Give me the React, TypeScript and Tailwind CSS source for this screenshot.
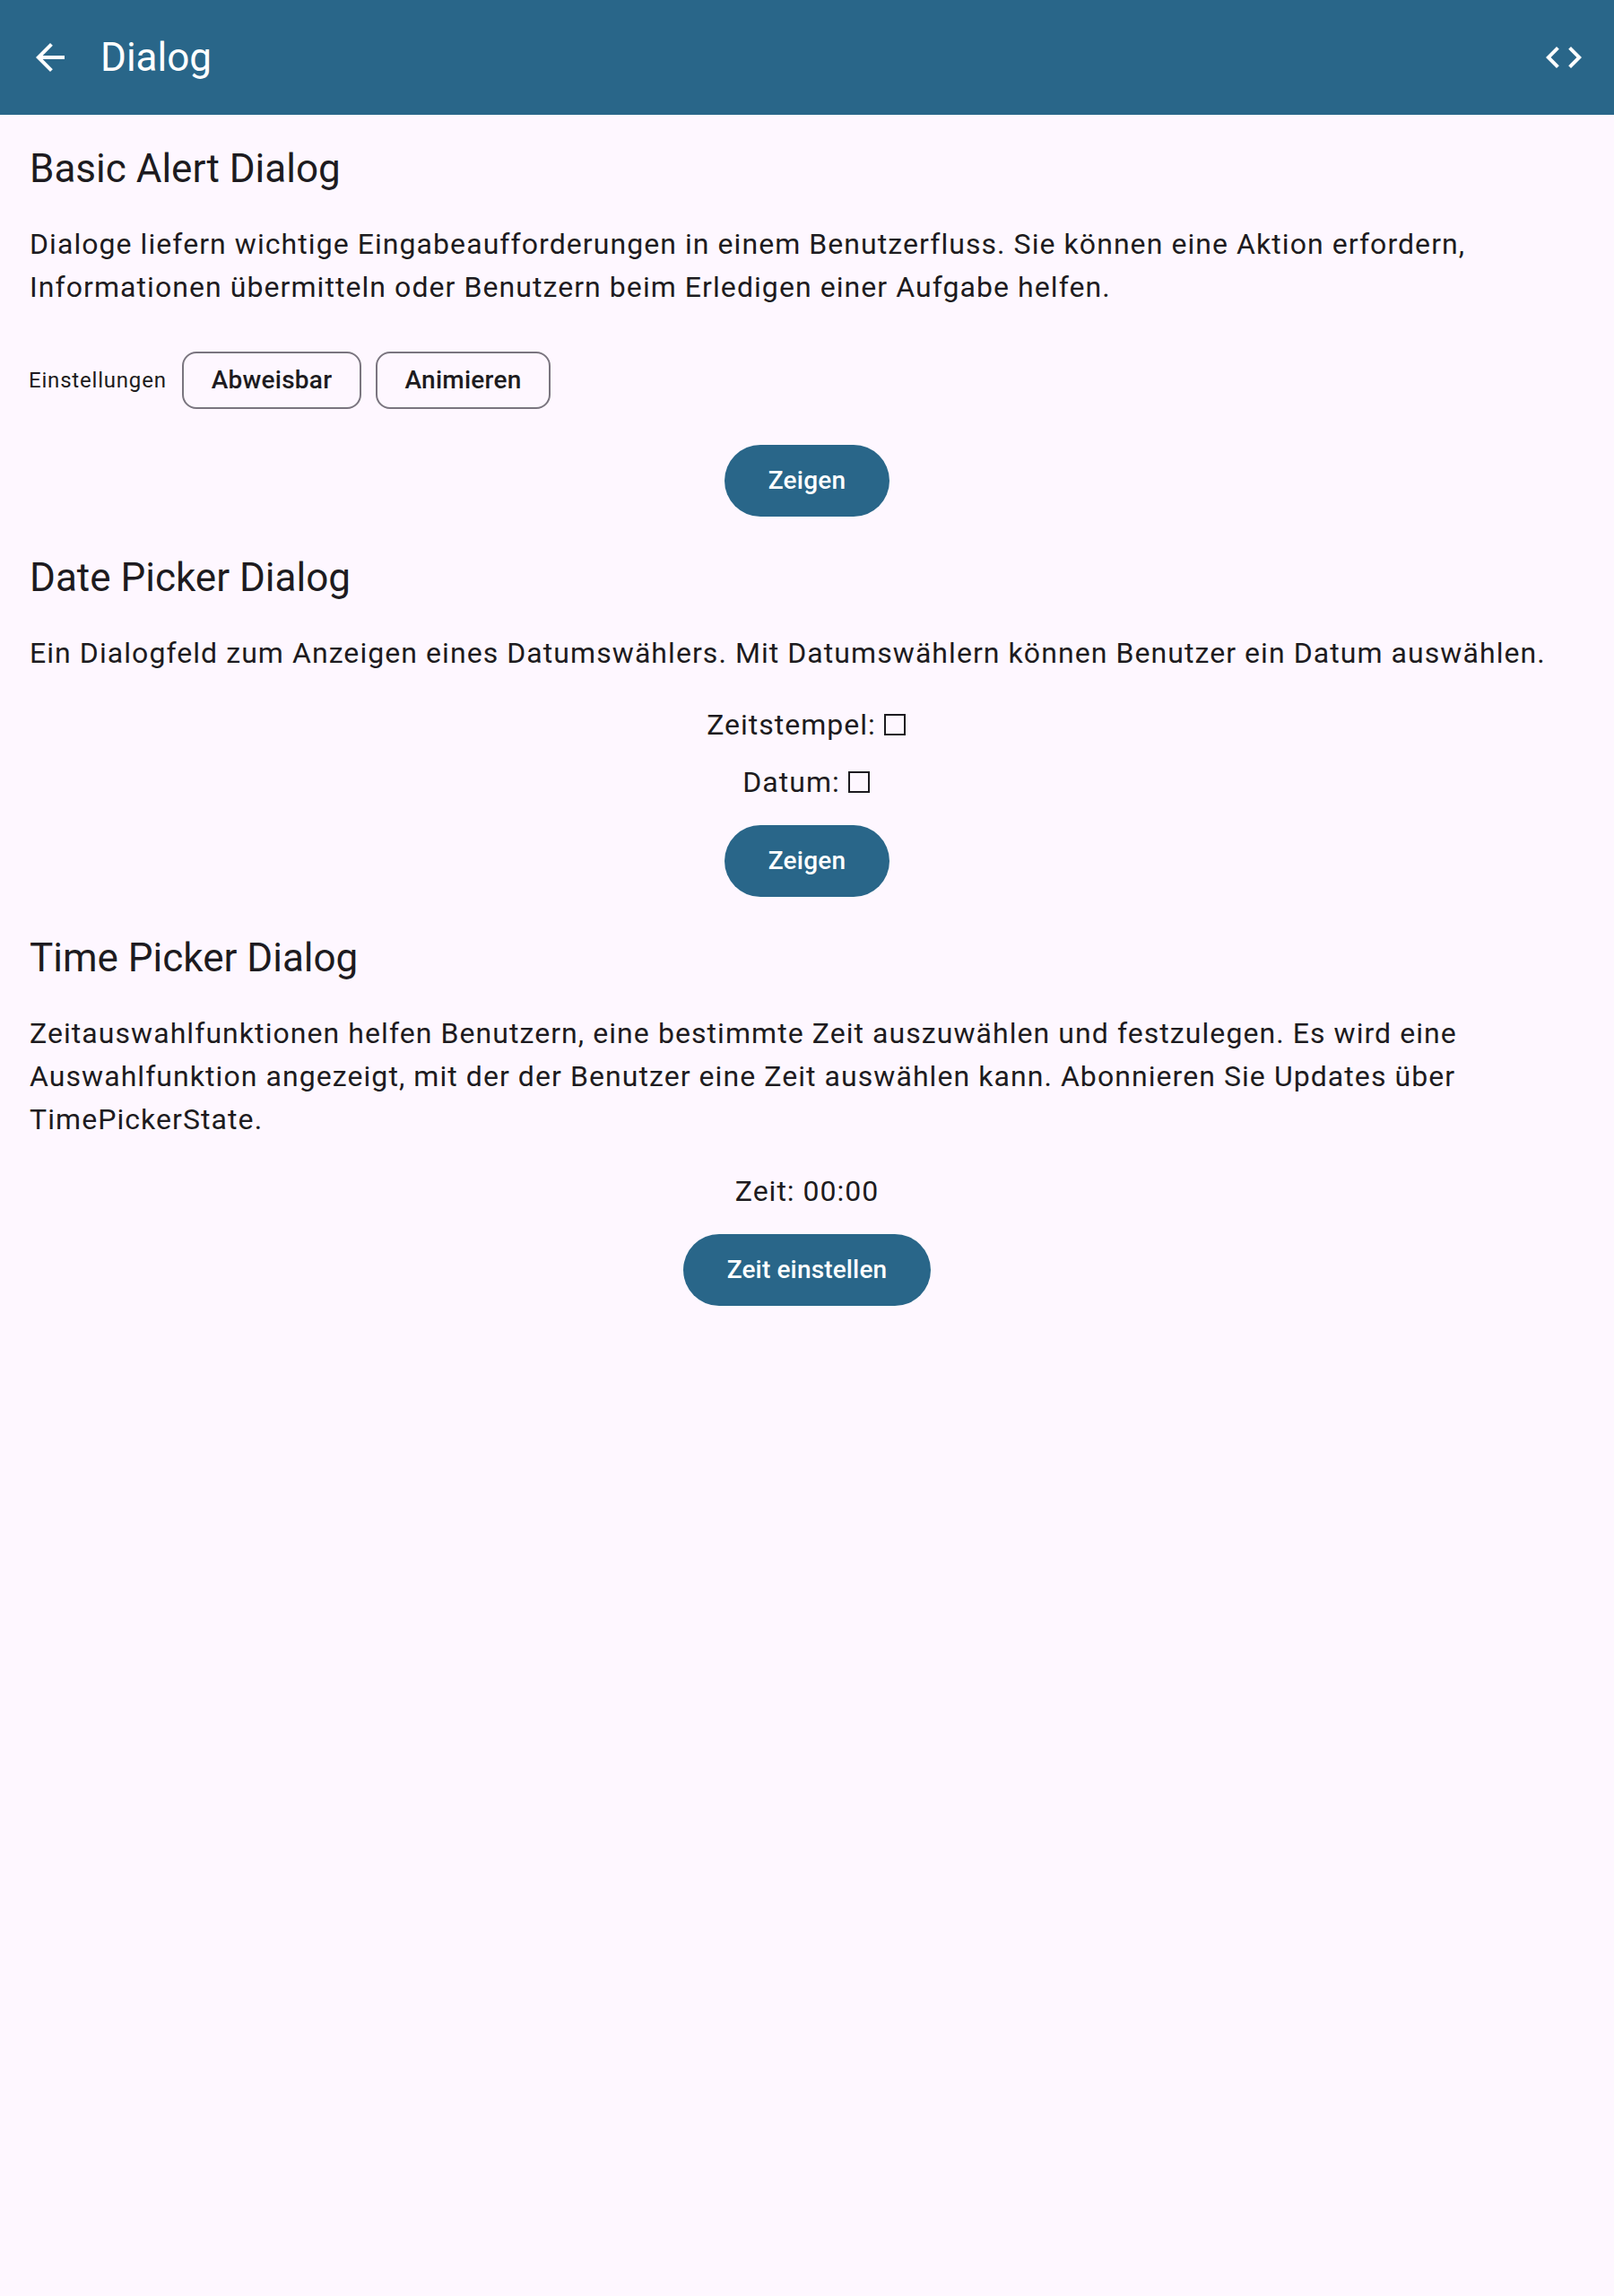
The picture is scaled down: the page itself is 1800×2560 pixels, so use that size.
import type { ReactNode } from "react";

function Heading({ children }: { children: ReactNode }) {
  return <h2 className="pl-px text-[44px] leading-14">{children}</h2>;
}

function Body({ children }: { children: ReactNode }) {
  return <p className="mt-8 pl-px text-[32px] leading-12 tracking-[1.065px] whitespace-nowrap">{children}</p>;
}

function Chip({ className, children }: { className: string; children: ReactNode }) {
  return (
    <button
      className={`h-16 rounded-2xl border-2 border-[#7a757f] text-[28px] leading-10 font-medium tracking-[0.25px] ${className}`}
    >
      {children}
    </button>
  );
}

function FilledButton({ className, children }: { className: string; children: ReactNode }) {
  return (
    <button
      className={`h-20 rounded-full bg-[#296689] text-[28px] leading-10 font-medium text-white ${className}`}
    >
      {children}
    </button>
  );
}

function Value({ label, children }: { label: string; children: ReactNode }) {
  return (
    <div className="text-[32px] leading-12 tracking-[1px]">
      {label}: {children}
    </div>
  );
}

function EmptyBox() {
  return <span className="mr-[2px] inline-block size-6 translate-y-px border-2 border-[#1d1b20]" />;
}

export default function App() {
  return (
    <div className="flex min-h-[2560px] w-full flex-col bg-[#fef7ff] font-['Roboto',sans-serif] text-[#1d1b20]">
      <header className="flex h-32 items-center bg-[#296689] px-8 text-white">
        <svg className="size-12" viewBox="0 0 24 24" fill="currentColor">
          <path d="M20 11H7.83l5.59-5.59L12 4l-8 8 8 8 1.41-1.41L7.83 13H20z" />
        </svg>
        <h1 className="ml-8 text-[44px] leading-14">Dialog</h1>
        <svg className="ml-auto size-12" viewBox="0 0 24 24" fill="currentColor">
          <path d="M9.4 16.6L4.8 12l4.6-4.6L8 6l-6 6 6 6zM14.6 16.6l4.6-4.6-4.6-4.6L16 6l6 6-6 6z" />
        </svg>
      </header>
      <main className="flex flex-col gap-10 px-8 pt-8">
        <section>
          <Heading>Basic Alert Dialog</Heading>
          <Body>
            Dialoge liefern wichtige Eingabeaufforderungen in einem Benutzerfluss. Sie können eine Aktion erfordern,
            <br />
            Informationen übermitteln oder Benutzern beim Erledigen einer Aufgabe helfen.
          </Body>
          <div className="mt-12 flex items-center gap-4">
            <span className="w-[155px] text-2xl leading-8 tracking-[0.8px]">Einstellungen</span>
            <Chip className="w-[200px]">Abweisbar</Chip>
            <Chip className="w-[195px]">Animieren</Chip>
          </div>
          <div className="mt-10 flex justify-center">
            <FilledButton className="w-[184px] tracking-[0.2px]">Zeigen</FilledButton>
          </div>
        </section>
        <section>
          <Heading>Date Picker Dialog</Heading>
          <Body>
            Ein Dialogfeld zum Anzeigen eines Datumswählers. Mit Datumswählern können Benutzer ein Datum auswählen.
          </Body>
          <div className="mt-8 flex flex-col items-center gap-4">
            <Value label="Zeitstempel">
              <EmptyBox />
            </Value>
            <Value label="Datum">
              <EmptyBox />
            </Value>
          </div>
          <div className="mt-6 flex justify-center">
            <FilledButton className="w-[184px] tracking-[0.2px]">Zeigen</FilledButton>
          </div>
        </section>
        <section>
          <Heading>Time Picker Dialog</Heading>
          <Body>
            Zeitauswahlfunktionen helfen Benutzern, eine bestimmte Zeit auszuwählen und festzulegen. Es wird eine
            <br />
            Auswahlfunktion angezeigt, mit der der Benutzer eine Zeit auswählen kann. Abonnieren Sie Updates über
            <br />
            TimePickerState.
          </Body>
          <div className="mt-8 flex flex-col items-center gap-6">
            <Value label="Zeit">00:00</Value>
            <FilledButton className="w-[276px] tracking-[0.15px]">Zeit einstellen</FilledButton>
          </div>
        </section>
      </main>
    </div>
  );
}
